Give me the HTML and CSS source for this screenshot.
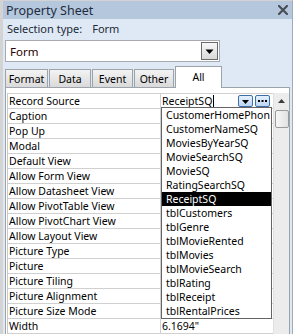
FILE: index.html
```html
<!DOCTYPE html>
<html>
<head>
<meta charset="utf-8">
<link rel="stylesheet" href="styles.css">
</head>
<body>
<div class="window">
  <div class="titlebar">
    <span class="title">Property Sheet</span>
    <svg class="close" width="10" height="10" viewBox="0 0 10 10"><path d="M1 1 L9 9 M9 1 L1 9" stroke="#4a4f57" stroke-width="2.2" stroke-linecap="square"/></svg>
  </div>
  <div class="seltype"><span>Selection type:</span><span class="seltype-val">Form</span></div>
  <div class="combo">
    <span class="combo-text">Form</span>
    <span class="combo-btn"><svg width="9" height="6" viewBox="0 0 9 6"><path d="M0.5 0.5 H8.5 L4.5 5 Z" fill="#000"/></svg></span>
  </div>
  <div class="tabs">
    <div class="tab t-format">Format</div>
    <div class="tab t-data">Data</div>
    <div class="tab t-event">Event</div>
    <div class="tab t-other">Other</div>
    <div class="tab active">All</div>
  </div>
  <div class="panel">
    <div class="grid">
      <div class="rows">
        <div class="row"><div class="lbl">Record Source</div><div class="val val-edit"><span class="edit-text">ReceiptSQ</span><span class="caret"></span><span class="sbtn sbtn-drop"><svg width="7" height="4" viewBox="0 0 7 4"><path d="M0 0 H7 L3.5 4 Z" fill="#000"/></svg></span><span class="sbtn sbtn-dots"><svg width="9" height="2" viewBox="0 0 9 2"><rect x="0" y="0" width="2" height="2" fill="#000"/><rect x="3.5" y="0" width="2" height="2" fill="#000"/><rect x="7" y="0" width="2" height="2" fill="#000"/></svg></span></div></div>
        <div class="row"><div class="lbl">Caption</div><div class="val"></div></div>
        <div class="row"><div class="lbl">Pop Up</div><div class="val"></div></div>
        <div class="row"><div class="lbl">Modal</div><div class="val"></div></div>
        <div class="row"><div class="lbl">Default View</div><div class="val"></div></div>
        <div class="row"><div class="lbl">Allow Form View</div><div class="val"></div></div>
        <div class="row"><div class="lbl">Allow Datasheet View</div><div class="val"></div></div>
        <div class="row"><div class="lbl">Allow PivotTable View</div><div class="val"></div></div>
        <div class="row"><div class="lbl">Allow PivotChart View</div><div class="val"></div></div>
        <div class="row"><div class="lbl">Allow Layout View</div><div class="val"></div></div>
        <div class="row"><div class="lbl">Picture Type</div><div class="val"></div></div>
        <div class="row"><div class="lbl">Picture</div><div class="val"></div></div>
        <div class="row"><div class="lbl">Picture Tiling</div><div class="val"></div></div>
        <div class="row"><div class="lbl">Picture Alignment</div><div class="val"></div></div>
        <div class="row"><div class="lbl">Picture Size Mode</div><div class="val"></div></div>
        <div class="row"><div class="lbl">Width</div><div class="val">6.1694"</div></div>
      </div>
      <div class="scrollbar">
        <div class="sb-up"><svg width="7" height="4" viewBox="0 0 7 4"><path d="M3.5 0 L7 4 H0 Z" fill="#3c3c3c"/></svg></div>
        <div class="sb-thumb"></div>
      </div>
    </div>
    <div class="droplist">
      <div class="item">CustomerHomePhon</div>
      <div class="item">CustomerNameSQ</div>
      <div class="item">MoviesByYearSQ</div>
      <div class="item">MovieSearchSQ</div>
      <div class="item">MovieSQ</div>
      <div class="item">RatingSearchSQ</div>
      <div class="item selected">ReceiptSQ</div>
      <div class="item">tblCustomers</div>
      <div class="item">tblGenre</div>
      <div class="item">tblMovieRented</div>
      <div class="item">tblMovies</div>
      <div class="item">tblMovieSearch</div>
      <div class="item">tblRating</div>
      <div class="item">tblReceipt</div>
      <div class="item">tblRentalPrices</div>
    </div>
  </div>
</div>
</body>
</html>
```

FILE: styles.css
```css
* { box-sizing: border-box; }
html, body { margin: 0; padding: 0; }
body {
  width: 295px;
  height: 334px;
  overflow: hidden;
  background: #ffffff;
  font-family: "Noto Sans", "Liberation Sans", sans-serif;
  font-size: 10.5px;
  color: #000;
}
.window {
  width: 293px;
  height: 334px;
  background: #dfe9f5;
  border-top: 1px solid #d3d3d3;
  border-left: 3px solid #d3d3d3;
  border-right: 1px solid #a3abb6;
  display: flex;
  flex-direction: column;
  overflow: hidden;
}
.titlebar {
  height: 18px;
  flex: none;
  background: #b5c7dd;
  display: flex;
  align-items: center;
  justify-content: space-between;
  padding: 0 4px 0 3px;
  font-size: 12.5px;
  color: #1e2d40;
}
.close { display: block; }
.seltype {
  height: 18px;
  flex: none;
  display: flex;
  align-items: center;
  padding-left: 4px;
  font-size: 11px;
  color: #222a35;
}
.seltype-val { margin-left: 10px; }
.combo {
  flex: none;
  margin: 3px 0 0 2px;
  width: 215px;
  height: 22px;
  background: #fff;
  border: 1px solid #a7abb0;
  display: flex;
  align-items: center;
  justify-content: space-between;
  padding: 1px 1px 1px 4px;
  font-size: 11.5px;
  color: #2a0000;
}
.combo-btn {
  width: 17px;
  height: 18px;
  border: 1px solid #6b6b6b;
  background: linear-gradient(#f7f7f7, #d9d9d9);
  display: flex;
  align-items: center;
  justify-content: center;
}
.combo-btn svg { display: block; margin-top: 1px; }
.tabs {
  flex: none;
  height: 25px;
  margin-left: 2px;
  display: flex;
  align-items: flex-end;
  gap: 1px;
}
.tab {
  height: 18px;
  border: 1px solid #9da3aa;
  border-bottom: none;
  background: linear-gradient(#f3f3f3, #dadada);
  display: flex;
  align-items: center;
  justify-content: center;
  font-size: 10.5px;
  color: #000;
}
.t-format { width: 43px; }
.t-data { width: 42px; }
.t-event { width: 41px; }
.t-other { width: 40px; }
.tab.active {
  width: 47px;
  height: 22px;
  margin-bottom: -1px;
  background: #fff;
  position: relative;
  z-index: 1;
  align-items: flex-start;
  padding-top: 3px;
}
.panel {
  flex: 1;
  margin-left: 2px;
  width: 285px;
  background: #fff;
  border: 1px solid #9da3aa;
  padding: 5px 0 0 1px;
  position: relative;
}
.grid { display: flex; }
.rows {
  width: 266px;
  border-left: 1px solid #c8c8c8;
  border-top: 1px solid #d0d0d0;
}
.row {
  height: 15px;
  display: flex;
  border-bottom: 1px solid #d0d0d0;
}
.lbl {
  width: 153px;
  border-right: 1px solid #d0d0d0;
  padding-left: 1px;
  line-height: 14px;
  white-space: nowrap;
  overflow: hidden;
}
.val {
  flex: 1;
  padding-left: 1px;
  line-height: 14px;
  white-space: nowrap;
  overflow: hidden;
}
.val-edit {
  display: flex;
  align-items: center;
}
.caret {
  width: 1px;
  height: 12px;
  background: #000;
  margin-left: 1px;
}
.sbtn {
  width: 15px;
  height: 12px;
  border: 1px solid #3d6fa6;
  border-radius: 2px;
  background: linear-gradient(#e6f1fd, #bcd6f5);
  display: flex;
  justify-content: center;
}
.sbtn-drop { margin-left: auto; align-items: flex-end; padding-bottom: 2px; }
.sbtn-dots { margin-left: 2px; margin-right: 3px; align-items: center; }
.sbtn svg { display: block; }
.scrollbar {
  width: 16px;
  background: #ececec;
  border-left: 1px solid #e0e0e0;
  display: flex;
  flex-direction: column;
  align-items: center;
}
.sb-up {
  height: 16px;
  width: 100%;
  display: flex;
  align-items: center;
  justify-content: center;
}
.sb-thumb {
  width: 14px;
  height: 18px;
  margin-top: 1px;
  border: 1px solid #9a9a9a;
  border-radius: 2px;
  background: linear-gradient(90deg, #f6f6f6, #e2e2e2);
}
.droplist {
  position: absolute;
  left: 155px;
  top: 19px;
  width: 111px;
  height: 212px;
  background: #fff;
  border: 1px solid #646464;
  overflow: hidden;
  z-index: 2;
}
.item {
  height: 14px;
  line-height: 14px;
  padding-left: 4px;
  white-space: nowrap;
  overflow: hidden;
  font-size: 10.5px;
}
.item.selected {
  background: #000;
  color: #fff;
}
```
